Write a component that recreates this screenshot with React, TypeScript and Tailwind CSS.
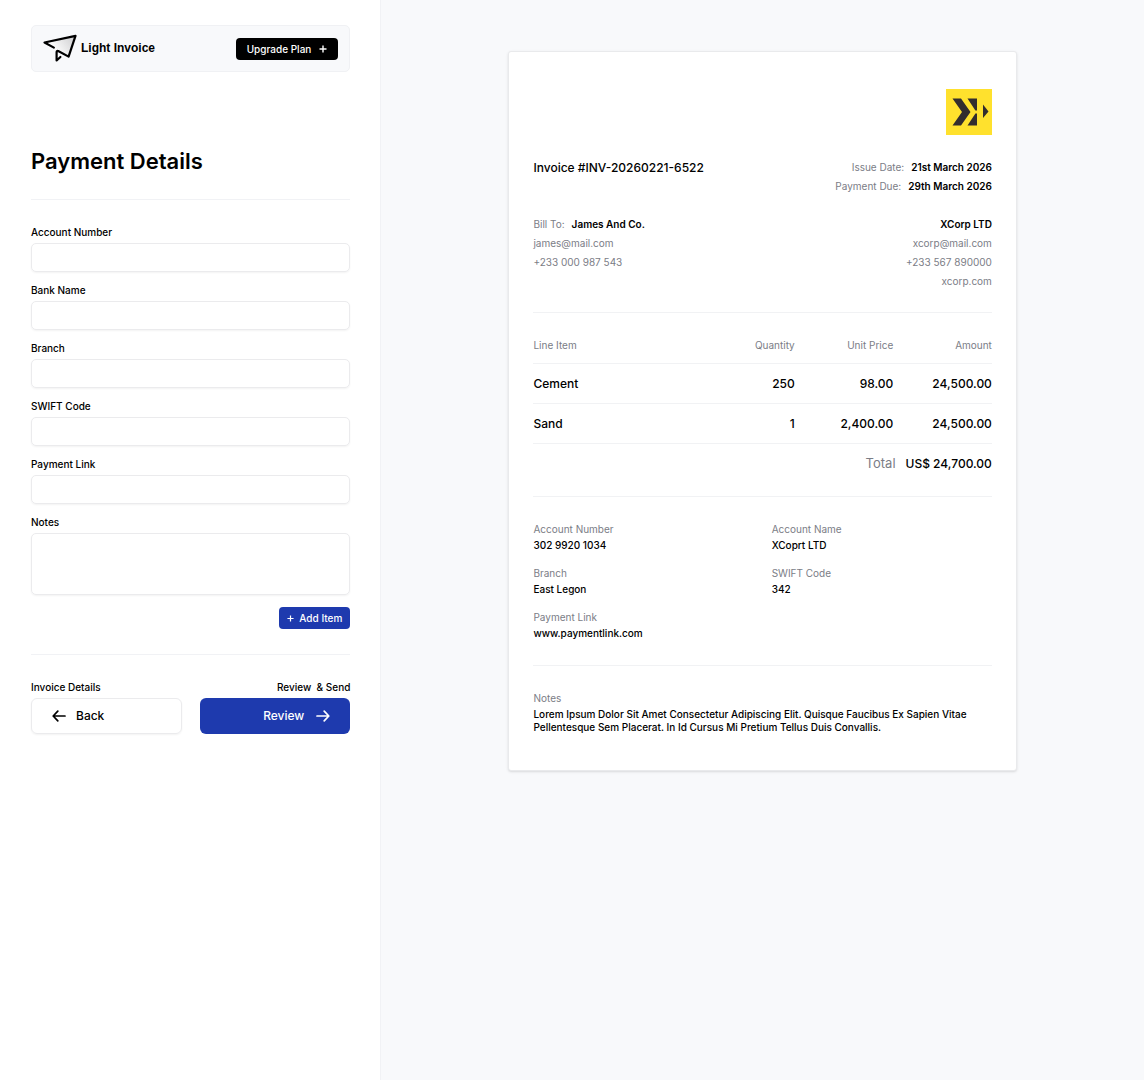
import { useState } from "react";

const FIELDS = [
  { id: "accountNumber", label: "Account Number" },
  { id: "bankName", label: "Bank Name" },
  { id: "branch", label: "Branch" },
  { id: "swiftCode", label: "SWIFT Code" },
  { id: "paymentLink", label: "Payment Link" },
];

const ITEMS = [
  { name: "Cement", quantity: "250", price: "98.00", amount: "24,500.00" },
  { name: "Sand", quantity: "1", price: "2,400.00", amount: "24,500.00" },
];

const PAYMENT = [
  { label: "Account Number", value: "302 9920 1034" },
  { label: "Account Name", value: "XCoprt LTD" },
  { label: "Branch", value: "East Legon" },
  { label: "SWIFT Code", value: "342" },
  { label: "Payment Link", value: "www.paymentlink.com" },
];

function PlaneLogo() {
  return (
    <svg width="34" height="28" viewBox="0 0 34 28" fill="none" aria-hidden="true">
      <defs>
        <linearGradient id="wing" x1="12" y1="18" x2="31" y2="4" gradientUnits="userSpaceOnUse">
          <stop stopColor="#ffffff" />
          <stop offset="1" stopColor="#d0d0d2" />
        </linearGradient>
      </defs>
      <path d="M1.5 8.5L32.5 1.8L25.6 22.6L14.5 16.6L10.7 13.6Z" fill="url(#wing)" />
      <path
        d="M10.9 13.6L1.5 8.5L32.5 1.8L25.6 22.6L15.2 17Q13.6 16.6 13.6 18.4V26.5L17.4 23"
        stroke="#000"
        strokeWidth="2.2"
        strokeLinejoin="round"
        strokeLinecap="round"
      />
    </svg>
  );
}

function CompanyLogo() {
  return (
    <svg width="46" height="46" viewBox="0 0 46 46" aria-hidden="true">
      <rect width="46" height="46" fill="#ffe12d" />
      <g fill="#332d2e">
        <path d="M6.5 9.5H15L24.5 23L15 36.5H6.5L16 23Z" />
        <path d="M21.5 9.5H31V21.5L29.4 21.5Z" />
        <path d="M29.4 24.5H31V36.5H21.5Z" />
        <path d="M37 15.5L42.5 22.5L37 29Z" />
      </g>
    </svg>
  );
}

function Plus({ size }: { size: number }) {
  return (
    <svg width={size} height={size} viewBox="0 0 8 8" stroke="currentColor" strokeWidth="1.4" aria-hidden="true">
      <path d="M4 0.5V7.5M0.5 4H7.5" />
    </svg>
  );
}

function Arrow({ left }: { left?: boolean }) {
  return (
    <svg
      width="14"
      height="12"
      viewBox="0 0 14 12"
      fill="none"
      stroke="currentColor"
      strokeWidth="1.7"
      strokeLinejoin="round"
      strokeLinecap="round"
      aria-hidden="true"
    >
      {left ? <path d="M13 6H1.2M5.8 1.2L1.2 6L5.8 10.8" /> : <path d="M1 6H12.8M8.2 1.2L12.8 6L8.2 10.8" />}
    </svg>
  );
}

export default function App() {
  const [values, setValues] = useState<Record<string, string>>({});

  const update = (id: string, value: string) => {
    setValues((prev) => ({ ...prev, [id]: value }));
  };

  return (
    <div className="flex min-h-screen bg-[#f8f9fb] font-['Inter',sans-serif] text-[10px] leading-4 font-medium text-black">
      <aside className="w-1/3 bg-white border-r border-[#f1f2f5] pl-[31px] pr-[30px] pt-[25px] pb-8">
        <header className="flex items-center justify-between h-[47px] px-[11px] rounded-[5px] bg-[#f8f9fb] border border-[#f0f1f4]">
          <div className="flex items-center gap-1 pb-0.5">
            <PlaneLogo />
            <span className="font-['Liberation_Sans',sans-serif] text-xs font-bold">Light Invoice</span>
          </div>
          <button type="button" className="flex items-center gap-2 h-[22px] px-[11px] rounded bg-black text-white">
            Upgrade Plan
            <Plus size={8} />
          </button>
        </header>

        <h1 className="mt-[75px] text-[22px] leading-7 font-semibold">Payment Details</h1>

        <form onSubmit={(e) => e.preventDefault()}>
          <div className="flex flex-col gap-[10px] mt-6 pt-6 border-t border-[#f1f2f5]">
            {FIELDS.map((field) => (
              <div key={field.id} className="flex flex-col gap-[3px]">
                <label htmlFor={field.id}>{field.label}</label>
                <input
                  id={field.id}
                  type="text"
                  value={values[field.id] ?? ""}
                  onChange={(e) => update(field.id, e.target.value)}
                  className="w-full h-[29px] px-2 rounded-[5px] border border-[#ebebed] shadow-xs outline-none focus:border-[#1e3aae]"
                />
              </div>
            ))}
            <div className="flex flex-col gap-[3px]">
              <label htmlFor="notes">Notes</label>
              <textarea
                id="notes"
                value={values.notes ?? ""}
                onChange={(e) => update("notes", e.target.value)}
                className="w-full h-[62px] px-2 py-1 rounded-[5px] border border-[#ebebed] shadow-xs outline-none resize-none focus:border-[#1e3aae]"
              />
            </div>
          </div>

          <div className="flex justify-end mt-3">
            <button type="button" className="flex items-center gap-[5px] h-[22px] px-2 rounded bg-[#1e3aae] text-white">
              <Plus size={7} />
              Add Item
            </button>
          </div>

          <div className="grid grid-cols-2 gap-[18px] mt-[25px] pt-6 border-t border-[#f1f2f5]">
            <div className="flex flex-col gap-[3px]">
              <span>Invoice Details</span>
              <button
                type="button"
                className="flex items-center gap-[10px] h-9 px-5 rounded-md border border-[#ebebed] shadow-xs text-xs"
              >
                <Arrow left />
                Back
              </button>
            </div>
            <div className="flex flex-col gap-[3px]">
              <span className="text-right whitespace-pre">Review  &amp; Send</span>
              <button
                type="submit"
                className="flex items-center justify-end gap-3 h-9 px-5 rounded-md bg-[#1e3aae] text-white text-xs"
              >
                Review
                <Arrow />
              </button>
            </div>
          </div>
        </form>
      </aside>

      <main className="flex-1 pt-[51px] pb-12">
        <article className="w-2/3 mx-auto px-6 pt-[37px] pb-9 rounded-[3px] bg-white border border-[#e9eaec] shadow">
          <div className="flex justify-end">
            <CompanyLogo />
          </div>

          <div className="flex justify-between mt-[23px] leading-[19px]">
            <h2 className="text-xs leading-[19px]">Invoice #INV-20260221-6522</h2>
            <div className="text-right">
              <p>
                <span className="mr-[7px] font-normal text-[#7b7d86]">Issue Date:</span>
                <span className="font-semibold">21st March 2026</span>
              </p>
              <p>
                <span className="mr-[7px] font-normal text-[#7b7d86]">Payment Due:</span>
                <span className="font-semibold">29th March 2026</span>
              </p>
            </div>
          </div>

          <div className="flex justify-between mt-[19px] leading-[19px] text-[#7b7d86] font-normal">
            <div>
              <p>
                <span className="mr-[7px]">Bill To:</span>
                <span className="font-semibold text-black">James And Co.</span>
              </p>
              <p>james@mail.com</p>
              <p>+233 000 987 543</p>
            </div>
            <div className="text-right">
              <p className="font-semibold text-black">XCorp LTD</p>
              <p>xcorp@mail.com</p>
              <p>+233 567 890000</p>
              <p>xcorp.com</p>
            </div>
          </div>

          <div className="mt-[21px] pt-[13px] pb-[13px] border-y border-[#f1f2f4]">
            <table className="w-full table-fixed text-right">
              <thead>
                <tr className="h-[37px] border-b border-[#f1f2f4] text-[#7b7d86]">
                  <th className="pt-0.5 text-left font-normal">Line Item</th>
                  <th className="pt-0.5 w-[20%] font-normal">Quantity</th>
                  <th className="pt-0.5 w-[21.5%] font-normal">Unit Price</th>
                  <th className="pt-0.5 w-[21.5%] font-normal">Amount</th>
                </tr>
              </thead>
              <tbody className="text-xs">
                {ITEMS.map((item) => (
                  <tr key={item.name} className="h-10 border-b border-[#f1f2f4]">
                    <td className="pt-0.5 text-left">{item.name}</td>
                    <td className="pt-0.5">{item.quantity}</td>
                    <td className="pt-0.5">{item.price}</td>
                    <td className="pt-0.5">{item.amount}</td>
                  </tr>
                ))}
              </tbody>
              <tfoot className="text-xs">
                <tr className="h-10">
                  <td colSpan={4}>
                    <span className="mr-[10px] text-[13px] font-normal text-[#7b7d86]">Total</span>
                    US$ 24,700.00
                  </td>
                </tr>
              </tfoot>
            </table>
          </div>

          <dl className="grid grid-cols-2 gap-x-[18px] gap-y-3 pt-6 pb-6 border-b border-[#f1f2f4]">
            {PAYMENT.map((row) => (
              <div key={row.label}>
                <dt className="font-normal text-[#7b7d86]">{row.label}</dt>
                <dd>{row.value}</dd>
              </div>
            ))}
          </dl>

          <section className="pt-6">
            <h3 className="font-normal text-[#7b7d86]">Notes</h3>
            <p className="mt-0.5 leading-[13px]">
              Lorem Ipsum Dolor Sit Amet Consectetur Adipiscing Elit. Quisque Faucibus Ex Sapien Vitae Pellentesque
              Sem Placerat. In Id Cursus Mi Pretium Tellus Duis Convallis.
            </p>
          </section>
        </article>
      </main>
    </div>
  );
}
